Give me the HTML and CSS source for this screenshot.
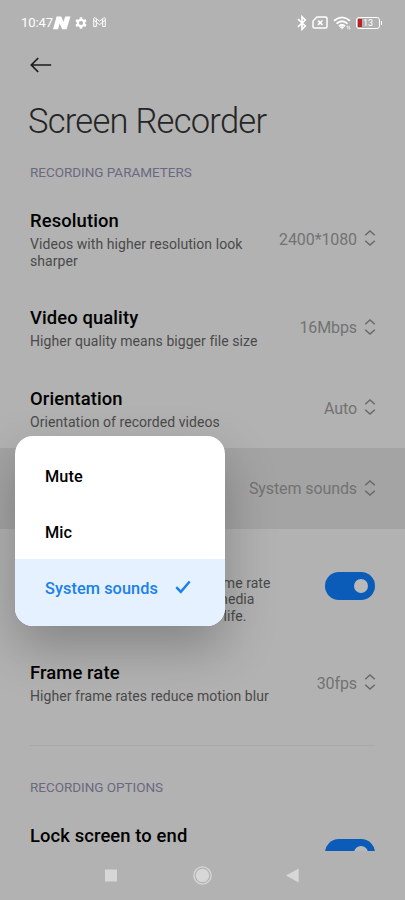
FILE: index.html
```html
<!DOCTYPE html>
<html lang="en">
<head>
<meta charset="utf-8">
<title>Screen Recorder</title>
<link rel="stylesheet" href="styles.css">
</head>
<body>
<svg class="defs" width="0" height="0">
  <symbol id="updown" viewBox="0 0 12 18"><path d="M1.200 6.200 6 1.900l4.800 4.300M1.200 11.800 6 16.100l4.800-4.300" fill="none" stroke="currentColor" stroke-width="1.400"/></symbol>
</svg>
<div class="screen">
  <header class="status">
    <span class="clock">10:47</span>
    <svg class="i-n" width="18" height="14" viewBox="0 0 18 14"><path d="M3.600.5h4.600l2.300 5.200L12.200.5h5.300L13.600 13.300H9.200L6.600 7.600 5 13.300H0z" fill="#fff"/></svg>
    <svg class="i-gear" width="12" height="12" viewBox="0 0 12 12"><circle cx="6" cy="6" r="3.200" fill="none" stroke="#fff" stroke-width="2.200"/><path d="M6 .3v2.200M6 9.500v2.200M1.060 3.150l1.900 1.100M9.040 7.750l1.900 1.100M1.060 8.850l1.900-1.100M9.040 4.250l1.900-1.100" stroke="#fff" stroke-width="2.600"/></svg>
    <svg class="i-mail" width="13" height="11" viewBox="0 0 13 11"><path d="M.7 1.500v8h2.600V5.200l3.200 2.500 3.200-2.500v4.300h2.600v-8q-.3-1.300-1.600-.5L6.500 4.200 2.300 1Q1 .2.700 1.500zM.8 3.200 3.300 5.200V2M12.200 3.200 9.700 5.200V2" fill="none" stroke="#fff" stroke-width="1"/></svg>
    <span class="grow"></span>
    <svg class="i-bt" width="10" height="16" viewBox="0 0 10 16"><path d="M1 4.200 8.300 11 5 14.300V1.700L8.300 5 1 11.800" fill="none" stroke="#fff" stroke-width="1.600"/></svg>
    <svg class="i-sim" width="16" height="13" viewBox="0 0 16 13"><path d="M5 1h8.500Q15 1 15 2.500v8q0 1.500-1.500 1.500h-11Q1 12 1 10.500V5z" fill="none" stroke="#fff" stroke-width="1.500"/><path d="m6 4.500 4.400 4.400M10.400 4.500 6 8.900" stroke="#fff" stroke-width="1.700"/></svg>
    <svg class="i-wifi" width="18" height="14" viewBox="0 0 18 14"><path d="M1 4.800q8-6.800 16 0M3.500 7.600q5.500-4.700 11 0M6 10.200q3-2.500 6 0" fill="none" stroke="#fff" stroke-width="1.800"/><path d="m6.800 11.100 2.200 2.200 2.200-2.200q-2.200-1.500-4.400 0z" fill="#fff"/><path d="M14.800 9.700v3.600M13.500 11l1.300-1.300M16.300 10v3.300l1.200-1.200" fill="none" stroke="#fff" stroke-width=".7"/></svg>
    <div class="battery"><i></i><span>13</span></div>
  </header>
  <nav class="bar">
    <svg width="22" height="16" viewBox="0 0 22 16"><path d="M21.200 8H1.500M8.200 1 1.300 8l6.900 7" fill="none" stroke="#1c1c1c" stroke-width="1.700"/></svg>
  </nav>
  <h1>Screen Recorder</h1>
  <main>
    <h2>RECORDING PARAMETERS</h2>
    <section class="row tall">
      <div class="text"><h3>Resolution</h3><p>Videos with higher resolution look<br>sharper</p></div>
      <div class="value">2400*1080<svg><use href="#updown"/></svg></div>
    </section>
    <section class="row">
      <div class="text"><h3>Video quality</h3><p>Higher quality means bigger file size</p></div>
      <div class="value">16Mbps<svg><use href="#updown"/></svg></div>
    </section>
    <section class="row">
      <div class="text"><h3>Orientation</h3><p>Orientation of recorded videos</p></div>
      <div class="value">Auto<svg><use href="#updown"/></svg></div>
    </section>
    <section class="row active">
      <div class="value">System sounds<svg><use href="#updown"/></svg></div>
      <div class="menu">
        <div class="option">Mute</div>
        <div class="option">Mic</div>
        <div class="option selected">System sounds<svg width="16" height="14" viewBox="0 0 16 14"><path d="m1.300 7.200 4.500 4.700L14.700 1.500" fill="none" stroke="#1a80ea" stroke-width="2.400"/></svg></div>
      </div>
    </section>
    <section class="row taller">
      <p class="wrapped"><span>frame rate</span><span class="l2">media</span><span class="l3">life.</span></p>
      <div class="switch"><i></i></div>
    </section>
    <section class="row">
      <div class="text"><h3>Frame rate</h3><p>Higher frame rates reduce motion blur</p></div>
      <div class="value">30fps<svg><use href="#updown"/></svg></div>
    </section>
    <hr>
    <h2>RECORDING OPTIONS</h2>
    <section class="row last">
      <h3>Lock screen to end</h3>
      <div class="switch"><i></i></div>
    </section>
  </main>
  <footer>
    <svg width="405" height="48" viewBox="0 0 405 48"><g fill="#d7d7d7"><path d="M105 18.500h12v12h-12z"/><circle cx="202.500" cy="24.500" r="6.700"/><path d="M286 24.500 298.700 17.500v14z"/></g><circle cx="202.500" cy="24.500" r="8.600" fill="none" stroke="#d7d7d7" stroke-width="1.400"/></svg>
  </footer>
</div>
</body>
</html>
```
FILE: styles.css
```css
* { box-sizing: border-box; }
body, h1, h2, h3, p { margin: 0; }
body { background: #b2b2b2; font-family: Roboto, sans-serif; color: #000; }
.defs { position: absolute; }
svg { display: block; flex: none; }
.screen { width: 405px; height: 900px; display: flex; flex-direction: column; overflow: hidden; }

.status { height: 45px; flex: none; display: flex; align-items: center; padding: 0 23px 0 21px; color: #fff; }
.clock { font-size: 13px; letter-spacing: -.1px; }
.i-gear { margin-left: 4px; }
.i-mail { margin-left: 6px; }
.grow { flex: 1; }
.i-sim { margin-left: 5px; }
.i-wifi { margin-left: 5px; }
.battery { position: relative; width: 24px; height: 12px; margin: 0 2px 0 5px; border: 1.500px solid #fff; border-radius: 3px; font-size: 9px; line-height: 10px; text-align: center; }
.battery::after { content: ""; position: absolute; right: -3px; top: 3px; width: 1px; height: 4px; background: #fff; }
.battery i { position: absolute; left: 1px; top: 1px; width: 4px; height: 8px; background: #c41e25; }

.bar { height: 40px; flex: none; display: flex; align-items: center; padding-left: 30px; }
h1 { height: 72px; flex: none; padding-left: 28px; font-size: 34.500px; letter-spacing: -.74px; font-weight: 300; line-height: 73px; color: #252525; white-space: nowrap; }
main { height: 694px; flex: none; overflow: hidden; }
h2 { height: 33px; padding: 7px 30px 0; font-size: 13.500px; line-height: 16px; letter-spacing: -.03px; font-weight: 400; color: #6b6980; }
.row { position: relative; height: 80.600px; display: flex; align-items: center; justify-content: space-between; padding: 0 29px 0 30px; }
.tall { height: 97px; }
.taller { height: 113.500px; }
.active { justify-content: flex-end; background: #a4a4a4; }
h3 { font-size: 18.400px; line-height: 24px; letter-spacing: .11px; font-weight: 500; white-space: nowrap; }
.text { padding-top: 2px; }
.text h3 { margin: -1px 0 3px; }
p { font-size: 14px; line-height: 16.500px; letter-spacing: .06px; color: #4a4a4a; white-space: nowrap; }
.value { display: flex; align-items: center; gap: 7px; padding-top: 1px; font-size: 16px; letter-spacing: -.1px; color: #727272; }
.value svg { width: 12px; height: 18px; margin-top: -2px; color: #686868; }
.wrapped { width: 240.500px; padding-top: 28px; }
.wrapped span { display: block; text-align: right; }
.wrapped .l2 { padding-right: 16px; }
.wrapped .l3 { padding-right: 24px; }

.switch { width: 50px; height: 28px; flex: none; display: flex; align-items: center; justify-content: flex-end; margin-right: 1px; padding-right: 7px; border-radius: 14px; background: #0a5cb8; }
.switch i { width: 14px; height: 14px; border-radius: 50%; background: #b9b9b9; }
hr { height: 1px; margin: 22px 30px 26px; border: 0; background: #a8a8a8; }

.menu { position: absolute; z-index: 2; left: 15px; top: -12px; width: 209.500px; height: 190px; padding-top: 12px; border-radius: 18px; overflow: hidden; background: #fff; box-shadow: 0 22px 50px rgba(0, 0, 0, .25); }
.option { height: 56px; display: flex; align-items: center; padding-left: 30px; font-size: 16.300px; letter-spacing: .08px; font-weight: 500; }
.option:nth-child(2) { height: 55px; padding-top: 1px; }
.selected { height: 67px; padding-bottom: 8px; background: #e5f1ff; color: #1a80ea; }
.selected svg { margin: -3px 0 0 17px; }
.last { align-items: flex-start; padding-top: 19px; }
.last .switch { margin-top: 15px; }
footer { height: 49px; flex: none; }
```
